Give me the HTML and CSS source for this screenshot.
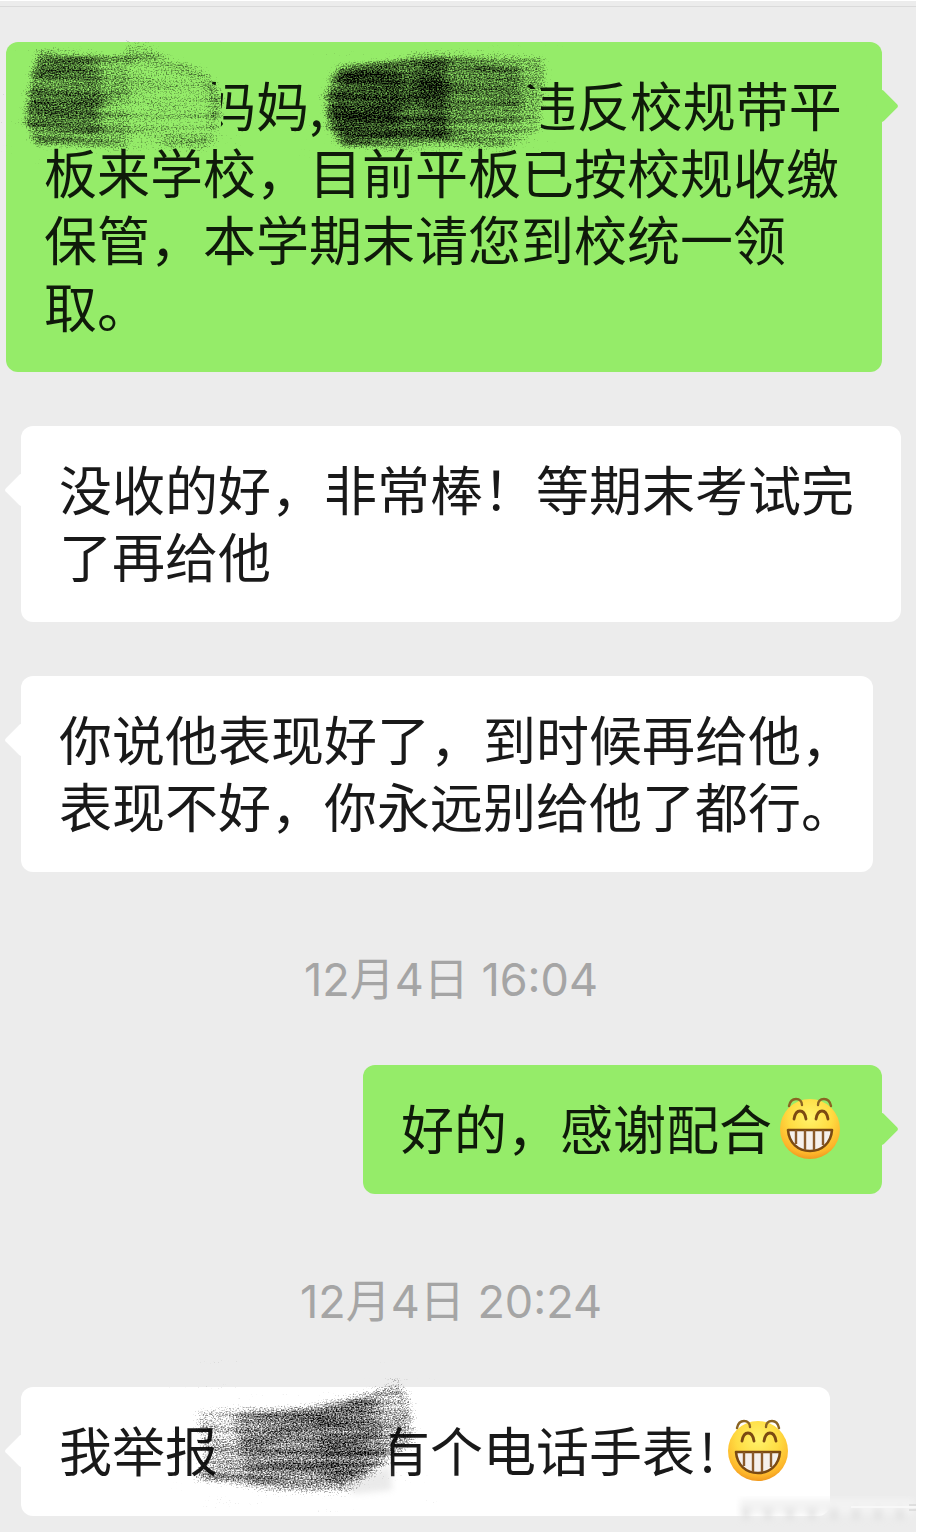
FILE: index.html
```html
<!DOCTYPE html>
<html lang="zh-CN">
<head>
<meta charset="utf-8">
<meta name="viewport" content="width=device-width, initial-scale=1">
<title>聊天记录</title>
<link rel="stylesheet" href="styles.css">
</head>
<body>
<svg class="defs" width="0" height="0" aria-hidden="true">
  <defs>
    <filter id="grain" x="-10%" y="-15%" width="120%" height="130%" color-interpolation-filters="sRGB">
      <feTurbulence type="fractalNoise" baseFrequency="0.6 0.75" numOctaves="2" seed="7"/>
      <feColorMatrix values="0 0 0 0 0  0 0 0 0 0  0 0 0 0 0  0 0 0 2 -0.5" result="n"/>
      <feTurbulence type="fractalNoise" baseFrequency="0.012 0.14" numOctaves="2" seed="3"/>
      <feColorMatrix values="0 0 0 0 0  0 0 0 0 0  0 0 0 0 0  0 0 0 2 -0.5" result="streak"/>
      <feComposite in="n" in2="streak" operator="arithmetic" k1="0" k2="0.7" k3="0.3" k4="0" result="mix"/>
      <feGaussianBlur in="SourceGraphic" stdDeviation="4" result="s"/>
      <feComposite in="s" in2="mix" operator="arithmetic" k1="0" k2="1.5" k3="1.1" k4="-1.02"/>
    </filter>
    <filter id="soft" x="-10%" y="-30%" width="120%" height="160%"><feGaussianBlur stdDeviation="3"/></filter>
    <radialGradient id="face" cx="50%" cy="30%" r="72%">
      <stop offset="0" stop-color="#fff36b"/><stop offset="0.5" stop-color="#ffdc42"/><stop offset="0.85" stop-color="#fdb52a"/><stop offset="1" stop-color="#ee941e"/>
    </radialGradient>
    <symbol id="grin" viewBox="0 0 62 64">
      <circle cx="31" cy="33" r="30" fill="url(#face)"/>
      <g fill="none" stroke="#7b4a12" stroke-linecap="round">
        <path d="M10 10C11 5 14 3 17 3c4 0 6 3 6 6M39 9c0-4 2-6 6-6 3 0 6 2 7 7" stroke-width="2.4" stroke="#8a6423"/>
        <path d="M15 23c1-6 3-8 6-8s5 2 6 8M37 23c1-6 3-8 6-8s5 2 6 8" stroke-width="2.8"/>
      </g>
      <path d="M9 34H53C52 47 43 55 31 55S10 47 9 34Z" fill="#f5f0ec" stroke="#7b4a12" stroke-width="2.6" stroke-linejoin="round"/>
      <path d="M17 34v14M26 34v20M35 34v20M44 34v15" stroke="#8a5a2a" stroke-width="2.4"/>
    </symbol>
  </defs>
</svg>
<main class="chat">
  <p class="bubble out"><span class="hidden short"><svg class="smudge first" viewBox="0 0 230 120" aria-hidden="true">
      <path d="M185 40L203 46 203 108H180Z" fill="#95ec69"/>
      <g filter="url(#grain)">
        <path d="M20 10C60 16 90 16 125 14L192 33 206 55 204 88 194 106 130 108 18 106 4 80 10 40Z" opacity=".32"/>
        <path d="M16 10L110 18 112 104H14L4 78Z" opacity=".2"/>
        <path d="M16 18L82 20V92L6 82Z" opacity=".34"/>
        <path d="M105 6L124 4 148 18M20 13L120 18M105 10L150 20 188 34" fill="none" stroke="#000" stroke-width="7" opacity=".4"/>
        <path d="M12 60H90M8 84L85 88M15 103H110M145 102L190 104M190 38Q206 62 192 88" fill="none" stroke="#000" stroke-width="8" opacity=".38"/>
      </g></svg></span>妈妈,<span class="hidden long"><svg class="smudge second" viewBox="0 0 250 120" aria-hidden="true">
      <path d="M212 44H225V108H200Z" fill="#95ec69"/>
      <g filter="url(#grain)">
        <path d="M20 20L80 14 95 6 228 9 231 30 225 88 190 102 80 106 28 104 8 82 6 48Z" opacity=".45"/>
        <path d="M100 14L205 18V88H110Z" opacity=".22"/>
        <path d="M24 22L130 14 132 98 26 100 12 78V46Z" opacity=".5"/>
        <path d="M30 28L84 20V92H25L14 70Z" opacity=".35"/>
        <path d="M110 16L205 26M120 54L206 58M125 92L192 102M100 38L205 42" fill="none" stroke="#000" stroke-width="8" opacity=".28"/>
      </g></svg></span>违反校规带平板来学校，目前平板已按校规收缴保管，本学期末请您到校统一领取。</p>
  <p class="bubble in">没收的好，非常棒！等期末考试完了再给他</p>
  <p class="bubble in trimmed">你说他表现好了，到时候再给他，表现不好，你永远别给他了都行。</p>
  <time class="stamp" datetime="12-04T16:04">12月4日 16:04</time>
  <p class="bubble out">好的，感谢配合<svg class="emoji" role="img" aria-label="露齿笑"><use href="#grin"/></svg></p>
  <time class="stamp" datetime="12-04T20:24">12月4日 20:24</time>
  <p class="bubble in">我举报<span class="hidden short"><svg class="smudge third" viewBox="0 0 240 130" aria-hidden="true">
      <path d="M192 30L202 30 203 110H190Z" fill="#fff"/>
      <g filter="url(#grain)">
        <path d="M6 34L60 31 120 26 175 14 214 0 224 24 228 62 204 84 182 100 160 116 80 114 4 104 14 75Z" opacity=".46"/>
        <path d="M45 34L130 30 190 20 198 84 155 106 60 106Z" opacity=".3"/>
        <path d="M125 32L178 24 180 92 140 108Z" opacity=".2"/>
        <path d="M50 40L150 32 215 8M50 62L150 70 222 38M30 84L150 86 222 60M20 100L150 102M150 104L200 80" fill="none" stroke="#000" stroke-width="6" opacity=".28"/>
      </g>
      <path d="M160 106L202 88 204 112 165 116Z" fill="#bbb" opacity=".3" filter="url(#soft)"/></svg></span>有个电话手表<span class="mark">!</span><svg class="emoji" role="img" aria-label="露齿笑"><use href="#grin"/></svg></p>
  <svg class="haze" viewBox="0 0 180 32" aria-hidden="true">
    <g filter="url(#soft)">
      <path d="M4 3H178V18H4Z" fill="#f3f3f3"/>
      <path d="M10 12V24M32 12V24M54 12V24M76 12V24M98 12V24M120 12V24M142 12V24M164 12V24" stroke="#dedede" stroke-width="8" opacity=".7"/>
    </g>
    <path d="M115 11H180" stroke="#f8f8f8" stroke-width="2"/>
    <path d="M173 9H180M173 14H180" stroke="#ccc"/>
  </svg>
</main>
</body>
</html>
```
FILE: styles.css
```css
* { box-sizing: border-box; }

body {
  margin: 0;
  background: #fff;
  color: #191919;
  font-family: "Noto Sans CJK SC", sans-serif;
}

.defs { position: absolute; }

.chat {
  position: relative;
  display: flex;
  flex-direction: column;
  gap: 54px;
  min-height: 100vh;
  margin-right: 9px;
  padding: 5px 0 16px;
  border-top: 1px solid #fff;
  background: #ececec;
}

.chat::before {
  content: "";
  height: 1px;
  margin-bottom: -19px;
  background: #dadada;
}

.bubble {
  position: relative;
  margin: 0;
  padding: 29px 38px 33px;
  border-radius: 12px;
  font-size: 53px;
  line-height: 67px;
}

.bubble::before {
  content: "";
  position: absolute;
  top: 52px;
  width: 24px;
  height: 24px;
  border-radius: 3px;
  background: inherit;
  transform: rotate(45deg);
}

.in {
  align-self: flex-start;
  max-width: calc(100% - 36px);
  margin-left: 21px;
  background: #fff;
}

.in::before { left: -12px; }

.out {
  align-self: flex-end;
  max-width: calc(100% - 40px);
  margin-right: 34px;
  background: #95ec69;
  color: #0f1a0a;
}

.out::before { right: -12px; }

.trimmed {
  max-width: calc(100% - 64px);
  padding-right: 18px;
}

.stamp {
  align-self: center;
  margin-right: 14px;
  padding-top: 23px;
  color: #a5a5a5;
  font-family: Inter, "Noto Sans CJK SC", sans-serif;
  font-size: 45px;
  line-height: 62px;
}

.hidden {
  position: relative;
  display: inline-block;
  height: 53px;
  vertical-align: top;
}

.short { width: 159px; }
.long { width: 200px; }

.smudge {
  position: absolute;
  overflow: visible;
}

.first { left: -26px; top: -30px; width: 230px; }
.second { left: -8px; top: -26px; width: 250px; }
.third { left: -30px; top: -38px; width: 240px; }

.mark { margin: 0 4px; }

.emoji {
  width: 62px;
  height: 64px;
  margin: 2px 3px 0 7px;
  vertical-align: top;
}

.haze {
  position: absolute;
  right: 0;
  bottom: 4px;
  width: 180px;
}
```
